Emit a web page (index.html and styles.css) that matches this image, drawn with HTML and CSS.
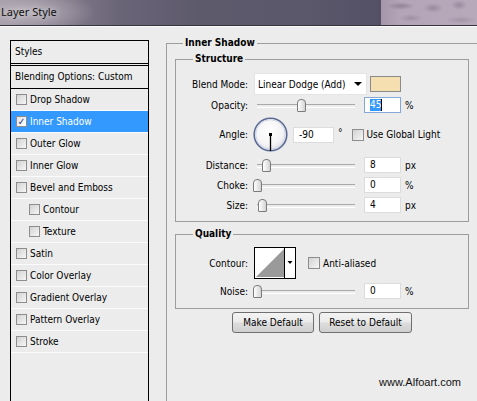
FILE: index.html
```html
<!DOCTYPE html>
<html>
<head>
<meta charset="utf-8">
<title>Layer Style</title>
<link rel="stylesheet" href="styles.css">
</head>
<body>
<div class="titlebar">
  <span class="title">Layer Style</span>
  <span class="backdrop"></span>
</div>
<div class="dialog">
  <div class="styles-panel">
    <div class="panel-head">Styles</div>
    <div class="blend-opts">Blending Options: Custom</div>
    <div class="item"><span class="cb"></span>Drop Shadow</div>
    <div class="item selected"><span class="cb checked">✓</span>Inner Shadow</div>
    <div class="item"><span class="cb"></span>Outer Glow</div>
    <div class="item"><span class="cb"></span>Inner Glow</div>
    <div class="item"><span class="cb"></span>Bevel and Emboss</div>
    <div class="item sub"><span class="cb"></span>Contour</div>
    <div class="item sub"><span class="cb"></span>Texture</div>
    <div class="item"><span class="cb"></span>Satin</div>
    <div class="item"><span class="cb"></span>Color Overlay</div>
    <div class="item"><span class="cb"></span>Gradient Overlay</div>
    <div class="item"><span class="cb"></span>Pattern Overlay</div>
    <div class="item"><span class="cb"></span>Stroke</div>
  </div>

  <fieldset class="group outer">
    <legend>Inner Shadow</legend>

    <fieldset class="group sub-group structure">
      <legend>Structure</legend>
      <div class="field blend-row">
        <span class="label">Blend Mode:</span>
        <span class="select"><span>Linear Dodge (Add)</span><span class="arrow"></span></span>
        <span class="swatch"></span>
      </div>
      <div class="field">
        <span class="label">Opacity:</span>
        <span class="slider"><span class="thumb" style="left:44px"></span></span>
        <span class="num focused"><span class="sel">45</span></span>
        <span class="unit">%</span>
      </div>
      <div class="field angle-row">
        <span class="label">Angle:</span>
        <svg class="dial" width="35" height="35" viewBox="0 0 35 35">
          <defs>
            <radialGradient id="dialfill" cx="0.45" cy="0.4" r="0.6">
              <stop offset="0" stop-color="#ffffff"/>
              <stop offset="0.7" stop-color="#f4f4f6"/>
              <stop offset="1" stop-color="#dcdde4"/>
            </radialGradient>
          </defs>
          <circle cx="17.5" cy="17.5" r="16.3" fill="url(#dialfill)" stroke="#5b6b95" stroke-width="1.6"/>
          <circle cx="17.5" cy="17.5" r="14.8" fill="none" stroke="#c9cfdf" stroke-width="0.8"/>
          <line x1="17.5" y1="17.5" x2="17.5" y2="34" stroke="#000" stroke-width="1.3"/>
          <rect x="16" y="16" width="3" height="3" fill="#000"/>
        </svg>
        <span class="num angle">-90</span>
        <span class="deg">°</span>
        <span class="cb big"></span>
        <span class="cb-label">Use Global Light</span>
      </div>
      <div class="field">
        <span class="label">Distance:</span>
        <span class="slider"><span class="thumb" style="left:9px"></span></span>
        <span class="num">8</span>
        <span class="unit">px</span>
      </div>
      <div class="field">
        <span class="label">Choke:</span>
        <span class="slider"><span class="thumb" style="left:0px"></span></span>
        <span class="num">0</span>
        <span class="unit">%</span>
      </div>
      <div class="field">
        <span class="label">Size:</span>
        <span class="slider"><span class="thumb" style="left:5px"></span></span>
        <span class="num">4</span>
        <span class="unit">px</span>
      </div>
    </fieldset>

    <fieldset class="group sub-group quality">
      <legend>Quality</legend>
      <div class="field contour-row">
        <span class="label">Contour:</span>
        <svg class="contour" width="42" height="32" viewBox="0 0 42 32">
          <rect x="0.5" y="0.5" width="41" height="31" fill="#fff" stroke="#000"/>
          <polygon points="2,30 30,2 30,30" fill="#9a9a9a"/>
          <line x1="30.5" y1="0" x2="30.5" y2="32" stroke="#000"/>
          <polygon points="33.5,14 38.5,14 36,17" fill="#000"/>
        </svg>
        <span class="cb big aa"></span>
        <span class="cb-label">Anti-aliased</span>
      </div>
      <div class="field noise-row">
        <span class="label">Noise:</span>
        <span class="slider"><span class="thumb" style="left:0px"></span></span>
        <span class="num">0</span>
        <span class="unit">%</span>
      </div>
    </fieldset>

    <div class="buttons">
      <button class="btn make">Make Default</button>
      <button class="btn reset">Reset to Default</button>
    </div>

    <div class="credit">www.Alfoart.com</div>
  </fieldset>
</div>
</body>
</html>
```
FILE: styles.css
```css
* {
  box-sizing: border-box;
}

html,
body {
  margin: 0;
  padding: 0;
}

body {
  width: 477px;
  height: 401px;
  overflow: hidden;
  background: #ececec;
  color: #000;
  font-family: "DejaVu Sans Condensed", "Liberation Sans", sans-serif;
  font-stretch: condensed;
  font-size: 10px;
  line-height: 13px;
}

/* ---------- title bar ---------- */
.titlebar {
  height: 26px;
  display: flex;
  align-items: stretch;
  border-bottom: 1px solid #36343b;
  background:
    radial-gradient(ellipse 70px 22px at 25px 12px, rgba(192, 186, 194, 0.85), rgba(192, 186, 194, 0) 100%),
    linear-gradient(to right, #9d95a1 0, #857d8d 60px, #6a6477 120px, #5d5a6c 200px, #5b586b 300px, #545166 378px);
}

.title {
  flex: 1;
  padding-left: 1px;
  font-family: "Noto Sans", "Liberation Sans", sans-serif;
  font-stretch: normal;
  font-size: 11px;
  line-height: 24px;
  color: #101010;
  text-shadow: 0 0 6px rgba(255, 255, 255, 0.7);
}

.backdrop {
  width: 96px;
  flex: none;
  background:
    radial-gradient(ellipse 14px 4px at 20px 6px, rgba(120, 100, 125, 0.55), rgba(120, 100, 125, 0)),
    radial-gradient(ellipse 10px 5px at 52px 8px, rgba(120, 100, 125, 0.45), rgba(120, 100, 125, 0)),
    radial-gradient(ellipse 8px 5px at 78px 5px, rgba(120, 100, 125, 0.45), rgba(120, 100, 125, 0)),
    radial-gradient(ellipse 12px 4px at 30px 18px, rgba(120, 100, 125, 0.35), rgba(120, 100, 125, 0)),
    radial-gradient(ellipse 16px 4px at 80px 20px, rgba(120, 100, 125, 0.3), rgba(120, 100, 125, 0)),
    linear-gradient(to right, #a597a9, #b4a6b8 20px, #b7a9ba);
}

/* ---------- dialog ---------- */
.dialog {
  display: flex;
  align-items: flex-start;
  padding-top: 9px;
  border-top: 1px solid #fafafa;
}

.styles-panel {
  flex: none;
  width: 139px;
  height: 361px;
  margin: 4px 0 0 10px;
  border: 1px solid #000;
  border-bottom: none;
}

.panel-head {
  height: 25px;
  padding-left: 4px;
  line-height: 22px;
  border-bottom: 3px double #000;
}

.blend-opts {
  height: 23px;
  padding-left: 4px;
  line-height: 22px;
  border-bottom: 1px solid #000;
}

.item {
  height: 22px;
  display: flex;
  align-items: center;
  border-bottom: 1px solid #fbfbfb;
}

.item.selected {
  background: #3399ff;
  color: #fff;
}

.cb {
  flex: none;
  width: 11px;
  height: 11px;
  margin: 0 3px 0 5px;
  border: 1px solid #8d8d8d;
  background: linear-gradient(135deg, #d2d2d2, #f6f6f6);
  display: flex;
  align-items: center;
  justify-content: center;
}

.item.sub .cb {
  margin-left: 18px;
}

.cb.checked {
  color: #21307a;
  font-family: "DejaVu Sans", sans-serif;
  font-size: 10px;
  font-weight: bold;
  line-height: 9px;
  background: linear-gradient(135deg, #e4e4e4, #ffffff);
}

/* ---------- group boxes ---------- */
.group {
  margin: 0;
  border: 1px solid #9d9d9d;
  min-width: 0;
}

.group legend {
  padding: 0 2px;
  font-weight: bold;
  line-height: 14px;
}

.outer {
  flex: none;
  width: 330px;
  height: 365px;
  margin-left: 17px;
  padding: 0 0 0 8px;
  border-bottom: none;
}

.outer > legend {
  margin-left: 8px;
}

.sub-group {
  width: 294px;
  padding: 0;
}

.sub-group > legend {
  margin-left: 17px;
}

.structure {
  margin-top: 2px;
  padding-bottom: 8px;
}

.quality {
  margin-top: 5px;
  padding-bottom: 9px;
}

/* ---------- rows ---------- */
.field {
  display: flex;
  align-items: center;
  height: 16px;
  margin-top: 4px;
}

.blend-row {
  height: 22px;
  margin-top: 7px;
}

.blend-row + .field {
  margin-top: 2px;
}

.angle-row {
  height: 35px;
}

.angle-row + .field {
  margin-top: 5px;
}

.contour-row {
  height: 32px;
  margin-top: 6px;
}

.label {
  flex: none;
  width: 72px;
  text-align: right;
}

.select {
  flex: none;
  width: 113px;
  height: 22px;
  margin-left: 6px;
  padding-left: 3px;
  display: flex;
  align-items: center;
  justify-content: space-between;
  background: #fff;
  border: 1px solid #e4e4e4;
}

.arrow {
  width: 0;
  height: 0;
  margin-right: 4px;
  border-left: 4px solid transparent;
  border-right: 4px solid transparent;
  border-top: 4px solid #000;
}

.swatch {
  flex: none;
  width: 31px;
  height: 16px;
  margin-left: 3px;
  background: #f5dfb0;
  border: 1px solid #8a8a8a;
}

.slider {
  flex: none;
  position: relative;
  width: 98px;
  height: 13px;
  margin-left: 9px;
  display: flex;
  align-items: center;
}

.slider::before {
  content: "";
  width: 100%;
  height: 2px;
  margin-top: 2px;
  border-top: 1px solid #a9a9a9;
  border-bottom: 1px solid #ffffff;
}

.thumb {
  position: absolute;
  top: 0;
  width: 9px;
  height: 13px;
  margin-left: -4px;
  border: 1px solid #7b7b7b;
  border-radius: 4px 4px 1px 1px;
  background: linear-gradient(to right, #ffffff, #d4d4d4);
}

.num {
  flex: none;
  width: 37px;
  height: 16px;
  margin-left: 9px;
  padding-left: 5px;
  line-height: 14px;
  background: #fff;
  border: 1px solid #dcdcdc;
}

.num.focused {
  border-color: #84a9d6;
}

.sel {
  display: inline-block;
  background: #3399ff;
  color: #fff;
  border-right: 1px solid #000;
  line-height: 12px;
}

.unit {
  margin-left: 4px;
}

.dial {
  flex: none;
  margin-left: 5px;
}

.num.angle {
  width: 41px;
  margin-left: 5px;
}

.deg {
  margin-left: 4px;
  align-self: flex-start;
  margin-top: 9px;
}

.cb.big {
  width: 12px;
  height: 12px;
  margin: 0 3px 0 9px;
}

.contour {
  flex: none;
  margin-left: 6px;
}

.cb.aa {
  margin-left: 12px;
}

/* ---------- buttons ---------- */
.buttons {
  width: 294px;
  display: flex;
  justify-content: center;
  gap: 5px;
  margin-top: 3px;
}

.btn {
  height: 21px;
  padding: 0;
  font: inherit;
  color: #000;
  border: 1px solid #6f6f6f;
  border-radius: 3px;
  background: linear-gradient(#f3f3f3, #ebebeb 45%, #dcdcdc 55%, #cfcfcf);
}

.btn.make {
  width: 82px;
}

.btn.reset {
  width: 93px;
}

.credit {
  width: 294px;
  margin-top: 43px;
  padding-right: 8px;
  text-align: right;
  font-family: "Liberation Sans", Arial, sans-serif;
  font-stretch: normal;
  font-size: 11px;
  line-height: 13px;
  color: #111;
}
```
